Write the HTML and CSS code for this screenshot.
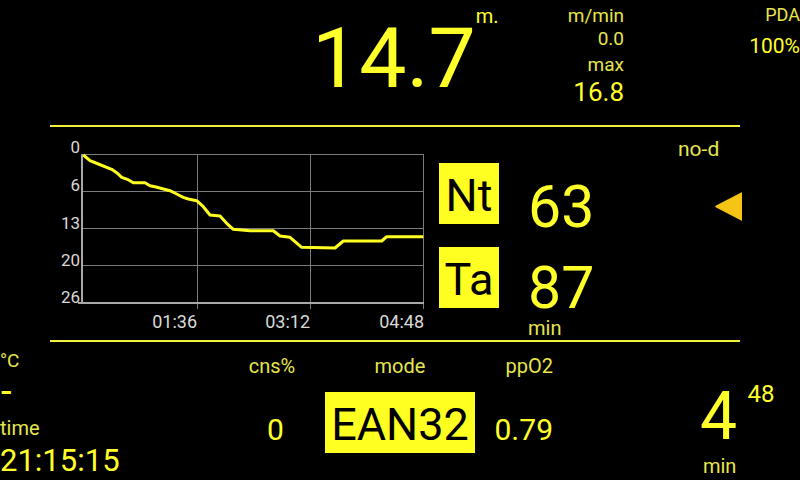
FILE: index.html
```html
<!DOCTYPE html>
<html>
<head>
<meta charset="utf-8">
<link rel="stylesheet" href="styles.css">
</head>
<body>
<div class="top">
  <div class="depth">14.7</div>
  <div class="unit">m.</div>
  <div class="rate">
    <div class="sm dim">m/min</div>
    <div class="sm dim r2">0.0</div>
    <div class="sm dim r3">max</div>
    <div class="maxv">16.8</div>
  </div>
  <div class="pda">
    <div class="pdal dim">PDA</div>
    <div class="pdav">100%</div>
  </div>
</div>
<div class="rule"></div>
<div class="mid">
  <svg class="chart" viewBox="50 135 380 200" width="380" height="200">
    <g stroke="#7c7c7c" stroke-width="1" fill="none">
      <line x1="82" y1="154.5" x2="424" y2="154.5"/>
      <line x1="82" y1="191.5" x2="424" y2="191.5"/>
      <line x1="82" y1="228.5" x2="424" y2="228.5"/>
      <line x1="82" y1="265.5" x2="424" y2="265.5"/>
      <line x1="197.5" y1="154" x2="197.5" y2="309"/>
      <line x1="310.5" y1="154" x2="310.5" y2="309"/>
      <line x1="423.5" y1="154" x2="423.5" y2="309"/>
    </g>
    <g stroke="#a8a8a8" stroke-width="2" fill="none">
      <line x1="82" y1="154" x2="82" y2="304"/>
      <line x1="78" y1="303" x2="424" y2="303"/>
    </g>
    <g class="ylab" text-anchor="end">
      <text x="80" y="153">0</text>
      <text x="80" y="191">6</text>
      <text x="80" y="229">13</text>
      <text x="80" y="266">20</text>
      <text x="80" y="303">26</text>
    </g>
    <g class="xlab" text-anchor="end">
      <text x="197" y="328">01:36</text>
      <text x="310" y="328">03:12</text>
      <text x="424" y="328">04:48</text>
    </g>
    <polyline fill="none" stroke="#ffff22" stroke-width="3" stroke-linejoin="round" points="83.3,155 90,160.7 98.3,164 111.7,169.3 116.7,172.7 121.7,177.3 127.3,179.3 133.3,182.7 145,182.7 150,185.7 155,186.7 170,190.7 176.7,194 183.3,197.3 188.3,199 196.7,200.7 203.3,206.7 210,215 220,216 226.7,223.3 233.3,229.3 250,230.7 273.3,230.7 280,236 290,237.3 301.7,247.3 335,248 343.3,241 381.7,241 386.7,236.7 423.3,236.7"/>
  </svg>
  <div class="tags">
    <div class="tag">Nt</div>
    <div class="tag">Ta</div>
  </div>
  <div class="vals">
    <div class="big2">63</div>
    <div class="big2 b2">87</div>
    <div class="minl dim">min</div>
  </div>
  <div class="nod">
    <div class="nodl dim">no-d</div>
    <svg class="tri" viewBox="0 0 27 29" width="27" height="29">
      <polygon points="1,14.5 27,1 27,28" fill="#f5c414" stroke="#f5c414" stroke-width="1.5" stroke-linejoin="round"/>
    </svg>
  </div>
</div>
<div class="rule"></div>
<div class="bot">
  <div class="env">
    <div class="deg dim">°C</div>
    <div class="tv">-</div>
    <div class="tl dim">time</div>
    <div class="clock">21:15:15</div>
  </div>
  <div class="stat cns">
    <div class="lbl dim">cns%</div>
    <div class="v cv">0</div>
  </div>
  <div class="stat mode">
    <div class="lbl dim">mode</div>
    <div class="ean">EAN32</div>
  </div>
  <div class="stat pp">
    <div class="lbl dim">ppO2</div>
    <div class="v">0.79</div>
  </div>
  <div class="ndl">
    <div class="row">
      <div class="n">4</div>
      <div class="sup">48</div>
    </div>
    <div class="nmin dim">min</div>
  </div>
</div>
</body>
</html>
```
FILE: styles.css
```css
* { box-sizing: border-box; }
html, body { margin: 0; padding: 0; background: #000; }
body {
  width: 800px;
  height: 480px;
  overflow: hidden;
  font-family: Roboto, "Liberation Sans", sans-serif;
  color: #ffff2a;
}
.dim { color: #e6e64c; }

.top { display: flex; height: 125px; }
.depth { margin: 17.3px 0 0 312px; font-size: 84px; line-height: 84px; height: 84px; }
.unit { margin-top: 6.2px; font-size: 20px; line-height: 20px; height: 20px; }
.rate { margin-left: auto; display: flex; flex-direction: column; align-items: flex-end; padding-top: 5.5px; }
.sm { font-size: 19px; line-height: 19px; height: 19px; }
.r2 { margin-top: 4.5px; }
.r3 { margin-top: 7px; }
.maxv { margin-top: 4.8px; font-size: 26px; line-height: 26px; }
.pda { width: 176px; flex: none; display: flex; flex-direction: column; align-items: flex-end; padding-top: 5.5px; }
.pdal { font-size: 18px; line-height: 18px; height: 18px; }
.pdav { margin-top: 12.1px; font-size: 21px; line-height: 21px; }

.rule { height: 2px; width: 690px; margin-left: 50px; background: #f2f23c; }

.mid { display: flex; height: 213px; }
.chart { display: block; flex: none; margin: 8px 0 0 50px; }
.ylab { font-family: Roboto, sans-serif; font-size: 17px; fill: #d9d9d9; }
.xlab { font-family: Roboto, sans-serif; font-size: 18px; fill: #d9d9d9; }
.tags { display: flex; flex-direction: column; gap: 23px; margin: 36px 0 0 9px; }
.tag {
  width: 60px; height: 61px; background: #ffff22; color: #000;
  font-size: 45px; line-height: 65px; text-align: center; overflow: hidden;
}
.vals { display: flex; flex-direction: column; margin: 50.3px 0 0 29px; }
.big2 { font-size: 59px; line-height: 59px; height: 59px; }
.b2 { margin-top: 22px; }
.minl { margin-top: 0.9px; font-size: 20px; line-height: 20px; }
.nod { display: flex; flex-direction: column; width: 64px; margin: 12.3px 58px 0 auto; }
.nodl { font-size: 21px; line-height: 21px; height: 21px; }
.tri { display: block; align-self: flex-end; margin-top: 31.7px; }

.bot { display: flex; height: 138px; }
.env { width: 230px; flex: none; display: flex; flex-direction: column; }
.deg { margin-top: 9px; font-size: 19px; line-height: 19px; height: 19px; }
.tv { margin-top: 1.5px; font-size: 38px; line-height: 38px; height: 38px; padding-left: 1px; }
.tl { margin-top: 8.7px; font-size: 20px; line-height: 20px; height: 20px; }
.clock { margin-top: 6.7px; font-size: 31px; line-height: 31px; }
.stat { display: flex; flex-direction: column; flex: none; }
.stat .lbl { margin-top: 14.2px; font-size: 20px; line-height: 20px; height: 20px; }
.stat .v { margin-top: 38.5px; font-size: 30px; line-height: 30px; }
.cns { width: 84px; align-items: center; }
.cv { padding-left: 7px; }
.mode { width: 172px; align-items: center; }
.ean {
  margin-top: 15.8px; width: 150px; height: 61px; background: #ffff22; color: #000;
  font-size: 45px; line-height: 65px; text-align: center; overflow: hidden;
}
.pp { width: 67px; align-items: flex-end; }
.ndl { display: flex; flex-direction: column; margin: 39.8px 25.5px 0 auto; }
.row { display: flex; align-items: flex-start; }
.n { margin-top: 2.6px; font-size: 66px; line-height: 66px; height: 66px; }
.sup { margin-left: 10.5px; font-size: 24px; line-height: 24px; }
.nmin { margin: 5.8px 0 0 3px; font-size: 20px; line-height: 20px; }
```
